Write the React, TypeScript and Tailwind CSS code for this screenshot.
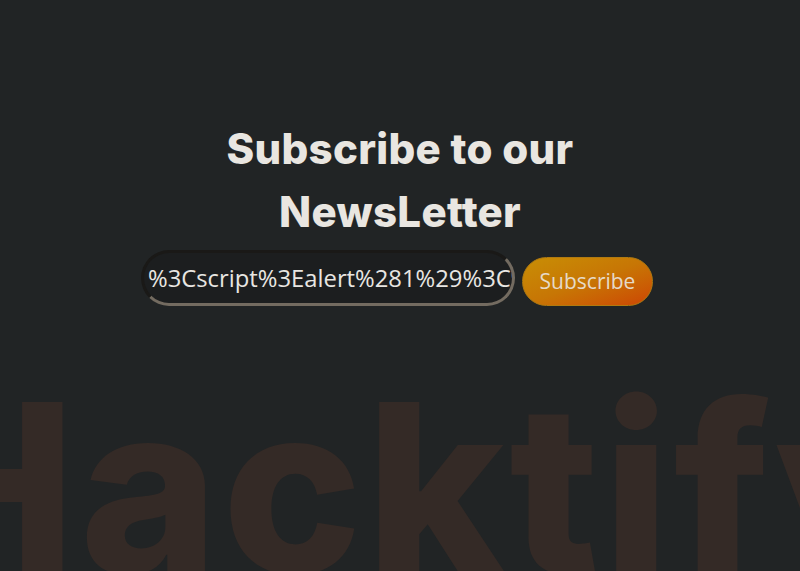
import React from "react";

export default function App() {
  return (
    <div className="relative h-[571px] w-[800px] overflow-hidden bg-[#212425]">
      <div className="flex flex-col items-center pt-[117px]">
        <h2 className="w-[420px] text-center text-[42px] font-extrabold leading-[63px] tracking-[0.3px] text-[#e9e6e1] [font-family:Inter,sans-serif]">
          Subscribe to our NewsLetter
        </h2>
        <form
          className="mt-[7px] flex items-end gap-[7px] pr-[6px]"
          onSubmit={(e) => e.preventDefault()}
        >
          <input
            type="text"
            defaultValue="%3Cscript%3Ealert%281%29%3C%2Fscript%3E"
            className="h-[56px] w-[374px] rounded-full border-[3px] border-t-[#1a1917] border-l-[#1a1917] border-b-[#736b60] border-r-[#736b60] bg-[#1c1e1f] pl-[4px] pr-0 text-[23.8px] text-[#e8e6e2] outline-none [font-family:'Open_Sans',sans-serif]"
          />
          <button
            type="submit"
            className="h-[49px] w-[131px] rounded-full border border-[#b07a10] bg-gradient-to-br from-[#c88e05] via-[#c77605] to-[#cc4404] text-[21px] text-[#e6dac8] [font-family:'Open_Sans',sans-serif]"
          >
            Subscribe
          </button>
        </form>
      </div>
      <div className="ml-[-100px] mt-[64px] whitespace-nowrap text-[235px] font-extrabold leading-none tracking-[4px] text-[#342a26] [font-family:Inter,sans-serif]">
        Hacktify
      </div>
    </div>
  );
}
